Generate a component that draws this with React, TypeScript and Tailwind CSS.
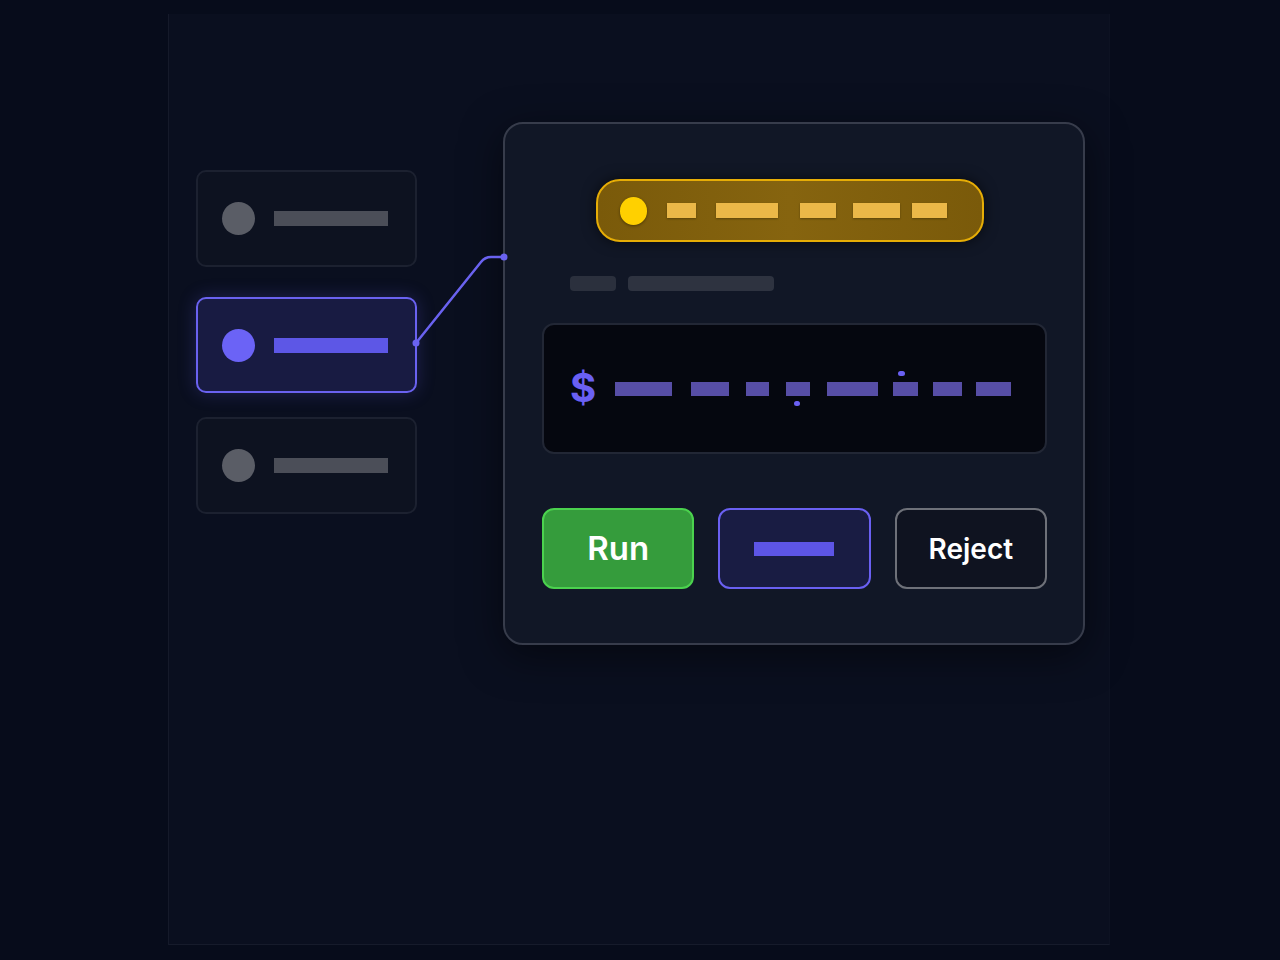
import React from "react";

function SideCard({ active }: { active?: boolean }) {
  return (
    <div
      className={
        active
          ? "h-[96px] rounded-[10px] border-2 border-[#6a62f0] bg-[#181b42] flex items-center pl-[24px] shadow-[0_0_18px_rgba(100,90,240,0.25)]"
          : "h-[97px] rounded-[10px] border-2 border-[#1c2130] bg-[#0d1220] flex items-center pl-[24px]"
      }
    >
      <div
        className={
          active
            ? "w-[33px] h-[33px] rounded-full bg-[#6b63f6]"
            : "w-[33px] h-[33px] rounded-full bg-[#5a5d66]"
        }
      />
      <div
        className={
          active
            ? "ml-[19px] w-[114px] h-[15px] bg-[#5d57e6]"
            : "ml-[19px] w-[114px] h-[15px] bg-[#4b4e58]"
        }
      />
    </div>
  );
}

export default function App() {
  const yBars = [
    { w: 29, ml: 20 },
    { w: 62, ml: 20 },
    { w: 36, ml: 22 },
    { w: 47, ml: 17 },
    { w: 35, ml: 12 },
  ];
  const tBars = [
    { w: 57, ml: 0 },
    { w: 38, ml: 19 },
    { w: 23, ml: 17 },
    { w: 24, ml: 17, dotBelow: true },
    { w: 51, ml: 17 },
    { w: 25, ml: 15, dotAbove: true },
    { w: 29, ml: 15 },
    { w: 35, ml: 14 },
  ];
  return (
    <div
      className="w-[1280px] h-[960px] bg-[#070c1b] overflow-hidden"
      style={{ fontFamily: "Inter, 'Noto Sans', 'Liberation Sans', sans-serif" }}
    >
      <div className="relative ml-[168px] mt-[14px] w-[942px] h-[931px] bg-[#0a0f1f] border-l border-[#151a2a] border-b border-r border-b-[#161b2b] border-r-[#0d1222] flex items-start">
        <div className="ml-[27px] mt-[156px] w-[221px] flex flex-col">
          <SideCard />
          <div className="mt-[30px]">
            <SideCard active />
          </div>
          <div className="mt-[24px]">
            <SideCard />
          </div>
        </div>

        <div className="ml-[86px] mt-[108px] w-[582px] h-[523px] rounded-[20px] border-2 border-[#373c4b] bg-[#111726] shadow-[0_10px_40px_rgba(0,0,0,0.5)] pl-[37px] pr-[36px] flex flex-col">
          <div className="mt-[55px] ml-[54px] w-[388px] h-[63px] rounded-[24px] border-2 border-[#e6ad06] bg-[#7a5a0b] bg-gradient-to-r from-[#7a5a0a] via-[#86640f] to-[#7a5a0a] flex items-center pl-[22px] shadow-[0_0_14px_rgba(0,0,0,0.6)]">
            <div className="w-[27px] h-[28px] rounded-full bg-[#ffd000] shadow-[0_1px_3px_rgba(0,0,0,0.4)]" />
            {yBars.map((b, i) => (
              <div
                key={i}
                className="h-[15px] bg-[#ebb848] shadow-[0_1px_2px_rgba(0,0,0,0.3)]"
                style={{ width: b.w, marginLeft: b.ml }}
              />
            ))}
          </div>

          <div className="mt-[34px] ml-[28px] flex items-center">
            <div className="w-[46px] h-[15px] rounded-[4px] bg-[#2b303d]" />
            <div className="ml-[12px] w-[146px] h-[15px] rounded-[4px] bg-[#2e3340]" />
          </div>

          <div className="mt-[32px] h-[131px] rounded-[12px] border-2 border-[#222735] bg-[#05070f] flex items-center pl-[26px]">
            <span className="text-[40px] leading-none font-bold text-[#6a60f3] -mt-[2px]">$</span>
            <div className="ml-[19px] flex items-center">
              {tBars.map((b, i) => (
                <div key={i} className="relative h-[14px] bg-[#574ea6]" style={{ width: b.w, marginLeft: b.ml }}>
                  {b.dotBelow && (
                    <div className="absolute left-[8px] top-[19px] w-[6px] h-[5px] rounded-full bg-[#6a60f3]" />
                  )}
                  {b.dotAbove && (
                    <div className="absolute left-[5px] -top-[11px] w-[7px] h-[5px] rounded-full bg-[#6a60f3]" />
                  )}
                </div>
              ))}
            </div>
          </div>

          <div className="mt-[54px] grid grid-cols-3 gap-[24px]">
            <div className="h-[81px] rounded-[12px] border-2 border-[#4bd24e] bg-[#359c3c] flex items-center justify-center">
              <span className="text-[33px] font-semibold text-white">Run</span>
            </div>
            <div className="h-[81px] rounded-[12px] border-2 border-[#6a60f2] bg-[#191c43] flex items-center justify-center">
              <div className="w-[80px] h-[14px] bg-[#5d55e6]" />
            </div>
            <div className="h-[81px] rounded-[12px] border-2 border-[#6e7179] bg-[#0f1320] flex items-center justify-center">
              <span className="text-[28px] font-semibold text-white">Reject</span>
            </div>
          </div>
        </div>

        <svg className="absolute left-0 top-0 pointer-events-none" width="942" height="931">
          <path
            d="M247 329 L312 248 Q316 243 322 243 L335 243"
            fill="none"
            stroke="#6a62f0"
            strokeWidth="2.5"
          />
          <circle cx="247" cy="329" r="3.5" fill="#6a62f0" />
          <circle cx="335" cy="243" r="3.5" fill="#6a62f0" />
        </svg>
      </div>
    </div>
  );
}
